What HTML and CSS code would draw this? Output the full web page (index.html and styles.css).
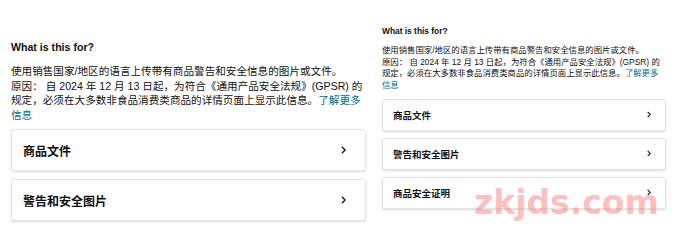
FILE: index.html
```html
<!DOCTYPE html>
<html lang="zh-CN">
<head>
<meta charset="utf-8">
<title>What is this for?</title>
<link rel="stylesheet" href="styles.css">
</head>
<body>
<div class="page">
  <section class="panel panel-lg">
    <h2 class="title">What is this for?</h2>
    <p class="desc">使用销售国家/地区的语言上传带有商品警告和安全信息的图片或文件。<br>原因： 自 2024 年 12 月 13 日起，为符合《通用产品安全法规》(GPSR) 的规定，必须在大多数非食品消费类商品的详情页面上显示此信息。<a class="link" href="#">了解更多信息</a></p>
    <div class="cards">
      <div class="card"><span class="card-label">商品文件</span><svg class="chev" viewBox="0 0 6 10"><polyline points="1,1 5,5 1,9"/></svg></div>
      <div class="card"><span class="card-label">警告和安全图片</span><svg class="chev" viewBox="0 0 6 10"><polyline points="1,1 5,5 1,9"/></svg></div>
    </div>
  </section>
  <section class="panel panel-sm">
    <h2 class="title">What is this for?</h2>
    <p class="desc">使用销售国家/地区的语言上传带有商品警告和安全信息的图片或文件。<br>原因： 自 2024 年 12 月 13 日起，为符合《通用产品安全法规》(GPSR) 的规定，必须在大多数非食品消费类商品的详情页面上显示此信息。<a class="link" href="#">了解更多信息</a></p>
    <div class="cards">
      <div class="card"><span class="card-label">商品文件</span><svg class="chev" viewBox="0 0 6 10"><polyline points="1,1 5,5 1,9"/></svg></div>
      <div class="card"><span class="card-label">警告和安全图片</span><svg class="chev" viewBox="0 0 6 10"><polyline points="1,1 5,5 1,9"/></svg></div>
      <div class="card"><span class="card-label">商品安全证明</span><svg class="chev" viewBox="0 0 6 10"><polyline points="1,1 5,5 1,9"/></svg></div>
    </div>
  </section>
</div>
<div class="watermark">zkjds.com</div>
</body>
</html>
```
FILE: styles.css
```css
html, body {
  margin: 0;
  padding: 0;
  background: #ffffff;
}
body {
  width: 677px;
  height: 238px;
  overflow: hidden;
  position: relative;
  font-family: "Liberation Sans", "Noto Sans CJK SC", sans-serif;
  color: #0f1111;
}
.page {
  display: flex;
  align-items: flex-start;
  gap: 16px;
  padding-left: 11px;
}
.panel {
  display: flex;
  flex-direction: column;
}
.title {
  margin: 0;
  font-weight: 700;
}
.desc {
  margin: 0;
}
.link {
  color: #007185;
  text-decoration: none;
}
.cards {
  display: flex;
  flex-direction: column;
}
.card {
  display: flex;
  align-items: center;
  justify-content: space-between;
  box-sizing: border-box;
  background: #fff;
  border: 1px solid #e3e6e6;
  border-radius: 2px;
  box-shadow: 0 1px 2px rgba(15, 17, 17, 0.15);
}
.card-label {
  font-weight: 700;
}
.chev {
  fill: none;
  stroke: #0f1111;
  stroke-width: 1.6;
}

/* large panel */
.panel-lg {
  width: 355px;
  padding-top: 40px;
}
.panel-lg .title {
  font-size: 10.6px;
  line-height: 14.5px;
}
.panel-lg .desc {
  margin-top: 9.5px;
  font-size: 10.6px;
  line-height: 14.5px;
}
.panel-lg .cards {
  margin-top: 7px;
  gap: 8px;
}
.panel-lg .card {
  height: 42px;
  padding: 0 19px 0 11px;
}
.panel-lg .card-label {
  font-size: 12px;
}
.panel-lg .chev {
  width: 5px;
  height: 8px;
}

/* small panel */
.panel-sm {
  width: 284px;
  padding-top: 26px;
}
.panel-sm .title {
  font-size: 8.4px;
  line-height: 11.6px;
}
.panel-sm .desc {
  margin-top: 7.6px;
  font-size: 8.4px;
  line-height: 11.6px;
}
.panel-sm .cards {
  margin-top: 7.4px;
  gap: 7px;
}
.panel-sm .card {
  height: 32px;
  padding: 0 14px 0 10px;
}
.panel-sm .card-label {
  font-size: 9.5px;
}
.panel-sm .chev {
  width: 4px;
  height: 7px;
}

.watermark {
  position: absolute;
  left: 474px;
  top: 185px;
  font-family: "DejaVu Sans", sans-serif;
  font-weight: 700;
  font-size: 33px;
  line-height: 36px;
  color: rgba(250, 130, 130, 0.5);
}
```
